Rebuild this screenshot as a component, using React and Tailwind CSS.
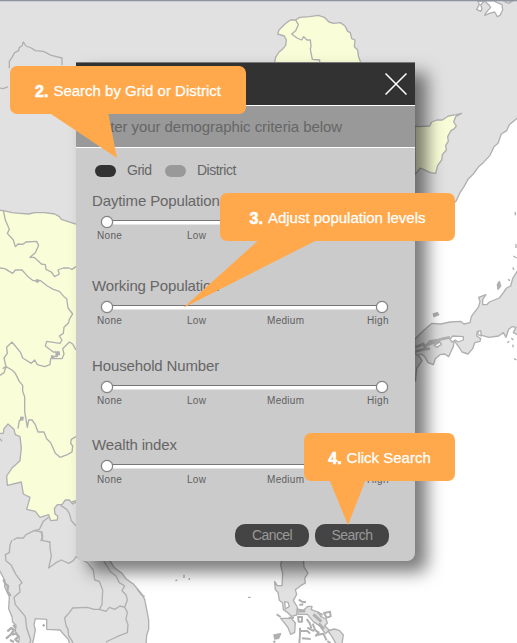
import React from "react";

const LABELS = ["None", "Low", "Medium", "High"];

/* Geography is drawn on a grid of three units per pixel. */
function MapBackdrop() {
  return (
    <svg
      className="absolute inset-0 h-full w-full"
      viewBox="0 0 1551 1929"
      fill="none"
      stroke="#b0b0b0"
      strokeWidth="4"
      strokeLinejoin="round"
    >
      {/* mainland */}
      <path
        fill="#e1e1e1"
        d="M-6 -6H1557V350L1528 374L1520 392L1504 402L1494 430L1482 440L1470 466L1450 488L1436 500L1420 522L1404 538L1392 560L1380 578L1368 604L1200 700L700 1500L330 1683L344 1704L366 1720L378 1736L400 1752L424 1780L434 1798L440 1828L446 1860V1888L440 1906L438 1935H210L205 1918L190 1902L180 1890L140 1888V1858L106 1856L102 1874L106 1890L100 1920L96 1935H54L58 1914L46 1894L48 1876L38 1866L36 1850L26 1826L28 1790L14 1760V1740L0 1714L-6 1706Z"
      />
      {/* lake inlets on the northern edge */}
      <path
        fill="#fff"
        d="M1434 4L1438 14L1430 28L1442 34L1446 26L1442 14L1454 4L1466 14L1472 22L1458 38L1454 46L1468 40L1484 36L1492 50L1500 46L1508 30L1506 14L1492 8L1480 2ZM1512 4L1526 10L1540 2Z"
      />
      <path d="M-4 264L10 266L24 260M28 205V184L36 172L44 158L56 152L58 142L66 138L70 126L78 138L94 144L106 152L130 154L154 166L186 174L186 196" />

      {/* yellow northern districts */}
      <g transform="translate(771 0)" fill="#fafed8">
        <path d="M52 190L56 172L66 156L78 146L86 136L88 120L82 108L62 102L66 90L84 72L100 60L116 60L128 52L158 50L184 46L202 52L216 66L230 70L250 68L264 78L272 94L280 98L284 116L294 120L292 140L302 150L304 168L312 190Z" />
        <path fill="none" d="M116 60L124 74L116 92L104 102L120 114L134 120L140 110L150 120H160L162 138L160 148L166 178L188 180V188" />
        <path d="M474 378L484 380L518 378L524 366L540 360L556 360L574 348L598 344L614 340L596 350L590 366L598 378L592 386L582 392L572 410L574 424L566 436L568 450L556 464L554 480L542 496L536 520L520 518L490 504L474 524Z" />
      </g>

      {/* yellow western districts */}
      <path
        fill="#fafed8"
        d="M-6 630L10 632L36 638L60 640L86 642L104 638H134L164 642L178 650L184 658L230 673V1505L218 1512L208 1500H196L186 1514H172L163 1526L165 1542L173 1548L172 1560L152 1562L146 1544L120 1552L106 1534L80 1528L90 1492L70 1482L64 1446L22 1456L20 1428L36 1404L60 1382L64 1344L60 1310L46 1304L42 1288L24 1272L12 1286L10 1300L-6 1300Z"
      />
      <g transform="translate(0 570)">
        <path d="M10 62L16 90L28 118L22 130L40 150L46 170L54 162L68 163L78 156L110 154L116 166L106 188L90 202L102 202L114 212L124 222L136 224L138 238L154 246L164 260L178 252L174 240L190 234H206L216 238L228 230" />
        <path d="M0 234L14 236L38 250L46 240L66 240L84 260L100 272H122L142 288L160 298L178 304L192 320L200 326L204 354L218 372L208 388L206 398L192 412L190 430L178 438L186 450L180 460L140 454L136 468L160 486H178L170 500L154 498L156 506H186L192 492L188 476L208 456L218 462L228 480" />
        <path d="M106 272H118M112 268V278M166 492H180M170 486V500" strokeWidth="7" />
        <path d="M36 456L46 468L62 488L68 504L94 520L104 510L112 524L134 530L150 524L152 506L164 500M36 456L20 472L22 490L12 504L18 530L8 536" />
      </g>
      <g transform="translate(0 1080)">
        <path d="M0 46L12 38L18 20L36 30L46 40L58 64L68 76V94L74 110V154L82 202L86 180L96 180L106 194L114 216L132 216L140 236L152 248L166 280L180 292L202 284L216 276L218 258L212 250L214 238L228 230" />
        <path d="M54 206L58 182L72 172" />
        <path d="M60 176H70" strokeWidth="12" />
        <path d="M0 236L6 244M228 422L216 426M182 436L200 448L208 460L214 482L228 498" />
        <path d="M146 472L130 484L118 508L102 512M40 540L50 534H70L78 524L102 512L126 516L128 530L122 544" />
      </g>

      {/* borders of the southern peninsula */}
      <g transform="translate(0 1284)">
        <path d="M36 336L30 350L28 374L16 380L18 398L34 412L48 440L66 464L58 472L60 492L42 508L46 530L58 544L76 566L80 600L92 636L88 650" />
        <path d="M124 312L128 338L150 342V360L154 384L146 420L168 404L184 396L206 406L220 398L228 386L262 404L280 426L284 456L298 460L308 486L306 530L298 544H282L262 538L218 540L208 554L194 570L198 592L204 604L206 624L216 638L220 650" />
        <path d="M298 544L318 550L328 538L344 544L360 534L374 538L382 516L378 500L366 488L374 474L358 464L348 444L332 432L312 400M374 538L382 552L378 574L384 590L382 614L360 622L330 636L318 642" />
        <path d="M10 454L16 468L24 474L22 490L32 504M22 610L34 600L42 606L32 620L18 632M36 620L48 616L56 626L46 634L54 642M30 636L42 642M40 590L46 600M128 590L134 594" strokeWidth="7" />
        <path d="M526 458L532 456M552 440V450M568 450V456M744 508H752M412 484L424 500L434 506" />
      </g>

      {/* eastern islands */}
      <g transform="translate(1230 720)" fill="#e1e1e1">
        <path d="M14 298L40 272L66 250L92 252L120 246L152 244L162 252L180 248L184 230L206 200L210 184L206 172L228 164L218 178V194L230 194L238 186L268 174L280 158L290 144L302 138L308 116L330 80V290L322 284L310 278L318 262L306 260L296 268L288 292L280 278L266 288L236 292L216 286L202 274L200 288L212 296L210 304L194 308L188 326L174 342L156 336L146 320L132 302L130 320L124 332L116 350L104 342L90 344L76 356L70 374L54 368L44 350L34 342L14 350Z" />
        <path fill="#fff" d="M120 298L128 288L160 290L160 300L144 306L136 300L126 306ZM72 316L90 306L94 314L80 322ZM204 274L212 272L214 288L204 284Z" />
        <path d="M16 322L40 312L44 322L60 304L84 300L100 296L120 292M16 334L40 328L60 326M40 320L64 310L90 304" strokeWidth="8" />
        <path d="M14 340L30 352L36 362L20 386L16 425" />
        <path fill="#b0b0b0" d="M262 134L268 124L272 138L264 148ZM70 222L82 218L86 224L72 230ZM318 12V24M310 48L320 54M308 82L312 90M294 118L300 122M292 308L298 304M304 294L310 300M308 314L310 322M312 356L320 360" />
      </g>
      <path d="M1546 636V646" />

      {/* archipelago */}
      <g transform="translate(750 1665)" fill="#e1e1e1">
        <path d="M96 10L92 30L98 56L96 92H82L74 80L76 104L84 112L88 136L98 144L100 164L112 172L124 184L140 180L142 156L130 136L140 118L136 104L152 92L166 84L164 70L174 54L162 36L160 10Z" />
        <path fill="#fff" d="M104 140L114 142L118 154L106 162Z" />
        <path d="M92 190L124 190L136 204L134 232L122 238L114 218L102 202Z" />
        <path d="M142 162L160 166L174 154L186 154L184 164L206 172L212 184L228 192L232 204L224 212L238 226L226 236L208 212L190 200L172 178L144 178Z" />
        <path d="M234 228L252 222L268 226L280 240L276 266H258L244 242Z" />
        <path fill="none" strokeWidth="6" d="M146 134L156 140L168 142M148 150L160 148M80 178L92 186M116 188H132M144 186H156V200H146ZM170 192L180 206L184 220M172 218L192 228M150 218V240L148 264M150 228H172L180 236M156 250L182 252M188 206L196 226L206 232L196 244M202 240L220 236L230 256M222 174L240 170L242 184L230 188ZM202 172L218 180" />
        <path d="M146 168H166M190 178L214 200M206 206L222 222" strokeWidth="9" />
        <path fill="#b0b0b0" d="M72 240L92 236L86 250L74 252Z" />
        <path d="M70 262L76 258M232 258L242 264" strokeWidth="6" />
      </g>
      <path d="M0 1H1551" stroke="#8f92a0" strokeWidth="5" />
    </svg>
  );
}

function Thumb() {
  return (
    <span className="h-3 w-3 rounded-full border border-[#7c7c7c] bg-white shadow-[0_0_1px_#777]" />
  );
}

function LevelSlider({ title }) {
  return (
    <section className="h-[79.5px]">
      <h2 className="pl-4 text-[15px] leading-[16px] tracking-[-0.13px] whitespace-nowrap">
        {title}
      </h2>
      <div className="mt-[7px] ml-[25px] flex h-3 w-[287px] items-center justify-between bg-[linear-gradient(#777,#777),linear-gradient(#fff,#fff),linear-gradient(#e4e4e4,#e4e4e4)] bg-[length:270px_1px,270px_3px,270px_1px] bg-[position:8px_4px,8px_5px,8px_8px] bg-no-repeat">
        <Thumb />
        <Thumb />
      </div>
      <div className="mt-[2px] ml-[21px] grid w-[310px] grid-cols-[90px_80px_100px_40px] text-[10px] leading-[12px] tracking-[0.3px] text-[#606060]">
        {LABELS.map((label) => (
          <span key={label}>{label}</span>
        ))}
      </div>
    </section>
  );
}

function Callout({ place, width, step, children, tail }) {
  return (
    <div className={`absolute ${place} ${width}`}>
      <svg className="absolute inset-0 h-full w-full overflow-visible">
        <polygon points={tail} fill="#ffa94c" />
      </svg>
      <div className="relative flex h-12 items-center justify-center rounded-[7px] bg-[#ffa94c] pt-[3px] text-[15px] whitespace-nowrap text-white [-webkit-text-stroke:0.25px_white]">
        <span className="mr-[5px] text-[16px] font-bold [-webkit-text-stroke:0.6px_white]">{step}.</span>
        <span>{children}</span>
      </div>
    </div>
  );
}

export default function App() {
  return (
    <main className="relative h-[643px] w-[517px] overflow-hidden bg-white font-['Liberation_Sans',Arial,sans-serif] text-[#666]">
      <MapBackdrop />

      <div className="relative pt-[62px] pl-[76px]">
        <div className="h-[499px] w-[339px] overflow-hidden rounded-b-[8px] bg-[#cbcbcb] shadow-[12px_11px_17px_rgba(0,0,0,0.53)]">
          <header className="flex h-[43px] items-center justify-end border-t border-[#777] bg-[#323232] pr-2">
            <svg className="h-[22px] w-[22px]" viewBox="0 0 22 22" stroke="#fff" strokeWidth="1.5">
              <path d="M0.5 0.5L21.5 21.5M21.5 0.5L0.5 21.5" />
            </svg>
          </header>
          <p className="h-[43px] border-y border-white bg-[#999] pl-4 text-[15px] leading-[42px] tracking-[-0.07px] whitespace-nowrap">
            Enter your demographic criteria below
          </p>

          <div className="flex h-[45px] items-center pl-[19px] text-[14px] tracking-[-0.5px]">
            <span className="h-3 w-[21px] rounded-[6px] bg-[#323232]" />
            <span className="ml-[11px] w-[38px]">Grid</span>
            <span className="h-3 w-[21px] rounded-[6px] bg-[#999]" />
            <span className="ml-[11px]">District</span>
          </div>

          <div className="h-[85px]">
            <LevelSlider title="Daytime Population" />
          </div>
          <LevelSlider title="Working Population" />
          <LevelSlider title="Household Number" />
          <LevelSlider title="Wealth index" />

          <footer className="mt-[7px] flex justify-end gap-[6px] pr-[26px] text-[14px] tracking-[-0.6px] text-[#999]">
            <button className="h-[23px] w-[74px] rounded-[10px] bg-[#444]">Cancel</button>
            <button className="h-[23px] w-[74px] rounded-[10px] bg-[#444]">Search</button>
          </footer>
        </div>
      </div>

      <Callout place="left-[10px] top-[66px]" width="w-[236px]" step="2" tail="38,46 98,46 107,92">
        Search by Grid or District
      </Callout>
      <Callout place="left-[220px] top-[193px]" width="w-[235px]" step="3" tail="41,45 101,45 -37,115">
        Adjust population levels
      </Callout>
      <Callout place="left-[304px] top-[433px]" width="w-[151px]" step="4" tail="25,46 62,46 44,92">
        Click Search
      </Callout>
    </main>
  );
}
